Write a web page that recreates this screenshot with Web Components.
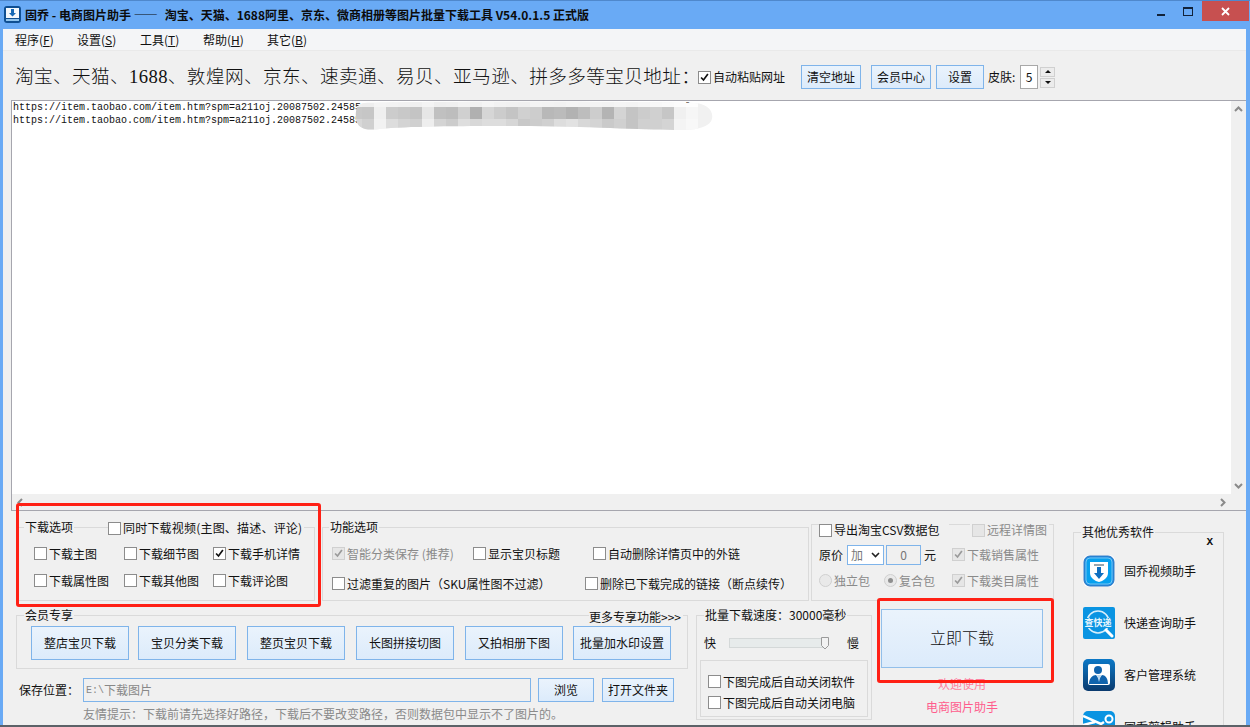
<!DOCTYPE html>
<html lang="zh">
<head>
<meta charset="utf-8">
<title>固乔 - 电商图片助手</title>
<style>
  html, body { margin: 0; height: 100%; overflow: hidden; background: #69aaf5; }
  body { font: 12px/16px "Noto Sans CJK SC", sans-serif; color: #111; }
</style>
</head>
<body>
<app-window></app-window>
<script>
const UI_FONT = '"Noto Sans CJK SC", sans-serif'

class XCheck extends HTMLElement {
  constructor () {
    super()
    this.shadowDOM = this.attachShadow({ mode: 'open' })
  }

  connectedCallback () {
    const disabled = this.hasAttribute('disabled')
    const tick = this.hasAttribute('checked')
      ? `<svg viewBox="0 0 13 13" width="11" height="11"><path d="M2.5 6.5l2.8 3L10.5 2.5" fill="none" stroke="${disabled ? '#9a9a9a' : '#111'}" stroke-width="2"/></svg>`
      : ''
    this.shadowDOM.innerHTML = `
      <style>
        :host { display: inline-flex; align-items: center; gap: 2px; white-space: nowrap; color: ${disabled ? '#8a8a8a' : 'inherit'}; }
        .box {
          width: 13px; height: 13px; box-sizing: border-box;
          display: flex; align-items: center; justify-content: center;
          border: 1px solid ${disabled ? '#d0d0d0' : '#8c8c8c'};
          background: ${disabled ? '#e6e6e6' : '#fff'};
        }
      </style>
      <span class="box">${tick}</span><slot></slot>
    `
  }
}
customElements.define('x-check', XCheck)

class XRadio extends HTMLElement {
  constructor () {
    super()
    this.shadowDOM = this.attachShadow({ mode: 'open' })
  }

  connectedCallback () {
    const dot = this.hasAttribute('checked') ? '<i></i>' : ''
    this.shadowDOM.innerHTML = `
      <style>
        :host { display: inline-flex; align-items: center; gap: 2px; white-space: nowrap; color: #8a8a8a; }
        .ring {
          width: 13px; height: 13px; box-sizing: border-box; border-radius: 50%;
          border: 1px solid #d0d0d0; background: #e9e9e9;
          display: flex; align-items: center; justify-content: center;
        }
        i { width: 5px; height: 5px; border-radius: 50%; background: #8f8f8f; }
      </style>
      <span class="ring">${dot}</span><slot></slot>
    `
  }
}
customElements.define('x-radio', XRadio)

class FlatButton extends HTMLElement {
  constructor () {
    super()
    this.shadowDOM = this.attachShadow({ mode: 'open' })
  }

  connectedCallback () {
    this.shadowDOM.innerHTML = `
      <style>
        :host {
          display: flex; align-items: center; justify-content: center;
          box-sizing: border-box; white-space: nowrap;
          border: 1px solid #7fb4ea;
          background: linear-gradient(#eaf3fc, #dcebfb);
        }
      </style>
      <slot></slot>
    `
  }
}
customElements.define('flat-button', FlatButton)

class GroupBox extends HTMLElement {
  constructor () {
    super()
    this.shadowDOM = this.attachShadow({ mode: 'open' })
  }

  connectedCallback () {
    this.shadowDOM.innerHTML = `
      <style>
        :host { display: block; position: relative; box-sizing: border-box; }
        fieldset {
          box-sizing: border-box; width: 100%; height: 100%; margin: 0;
          padding: var(--pad, 0);
          border: 1px solid #dadada; min-width: 0;
        }
        legend {
          margin-left: var(--legend-left, 8px);
          padding: var(--legend-pad, 0 1px);
          line-height: 16px; white-space: nowrap;
        }
      </style>
      <fieldset>
        <legend><slot name="legend"></slot></legend>
        <slot></slot>
      </fieldset>
    `
  }
}
customElements.define('group-box', GroupBox)

class RedMark extends HTMLElement {
  constructor () {
    super()
    this.shadowDOM = this.attachShadow({ mode: 'open' })
  }

  connectedCallback () {
    this.shadowDOM.innerHTML = `
      <style>
        :host {
          position: absolute; box-sizing: border-box; pointer-events: none;
          border: 3px solid #ff2015; border-radius: 3px;
        }
      </style>
    `
  }
}
customElements.define('red-mark', RedMark)

class TitleBar extends HTMLElement {
  constructor () {
    super()
    this.shadowDOM = this.attachShadow({ mode: 'open' })
  }

  connectedCallback () {
    this.shadowDOM.innerHTML = `
      <style>
        :host {
          display: flex; align-items: flex-start; height: 29px; box-sizing: border-box;
          border-top: 1px solid #4f88cc; background: #69aaf5;
        }
        .logo { margin: 5px 0 0 4px; }
        .text { margin: 6px 0 0 4px; font-weight: 700; white-space: nowrap; color: #0c0c0c; }
        .dash { letter-spacing: 7px; }
        .ctrl { margin-left: auto; display: flex; align-items: flex-start; }
        .min { width: 8px; height: 2px; margin: 13px 18px 0 0; background: #12233a; }
        .max { width: 10px; height: 9px; box-sizing: border-box; margin: 6px 9px 0 0; border: 1px solid #12233a; border-top-width: 2px; }
        .close { width: 47px; height: 20px; margin-right: 1px; background: #c75050; display: flex; align-items: center; justify-content: center; }
      </style>
      <svg class="logo" width="17" height="17" viewBox="0 0 17 17">
        <rect x="0" y="0" width="17" height="17" rx="3" fill="#0f4f92"/>
        <rect x="2" y="2" width="13" height="10" fill="#f4f8fc"/>
        <path d="M7 3h3v4h2l-3.500 3.500L5 7h2z" fill="#1668b5"/>
        <rect x="2" y="13" width="13" height="2" fill="#8fc4ee"/>
      </svg>
      <span class="text">固乔 - 电商图片助手 <span class="dash">——</span>淘宝、天猫、1688阿里、京东、微商相册等图片批量下载工具 V54.0.1.5 正式版</span>
      <span class="ctrl">
        <span class="min"></span>
        <span class="max"></span>
        <span class="close">
          <svg width="9" height="9" viewBox="0 0 9 9"><path d="M1 1l7 7M8 1L1 8" stroke="#fff" stroke-width="1.800"/></svg>
        </span>
      </span>
    `
  }
}
customElements.define('title-bar', TitleBar)

class MenuBar extends HTMLElement {
  constructor () {
    super()
    this.shadowDOM = this.attachShadow({ mode: 'open' })
  }

  connectedCallback () {
    this.shadowDOM.innerHTML = `
      <style>
        :host {
          display: grid; grid-template-columns: 62px 63px 63px 64px auto; align-items: center;
          height: 22px; box-sizing: border-box; padding-left: 12px;
          background: #f4f5f7; border-bottom: 1px solid #e9e9e9; white-space: nowrap;
        }
      </style>
      <span>程序(<u>F</u>)</span>
      <span>设置(<u>S</u>)</span>
      <span>工具(<u>T</u>)</span>
      <span>帮助(<u>H</u>)</span>
      <span>其它(<u>B</u>)</span>
    `
  }
}
customElements.define('menu-bar', MenuBar)

class SpinBox extends HTMLElement {
  constructor () {
    super()
    this.shadowDOM = this.attachShadow({ mode: 'open' })
  }

  connectedCallback () {
    this.shadowDOM.innerHTML = `
      <style>
        :host { display: flex; align-items: center; gap: 2px; }
        .val {
          width: 18px; height: 24px; box-sizing: border-box; background: #fff;
          border: 1px solid #a8a8a8; display: flex; align-items: center; justify-content: center;
        }
        .arrows { display: flex; flex-direction: column; gap: 1px; }
        .arrows span {
          width: 15px; height: 10px; box-sizing: border-box; border: 1px solid #d0d0d0; background: #ececec;
          display: flex; align-items: center; justify-content: center;
        }
      </style>
      <span class="val"><slot></slot></span>
      <span class="arrows">
        <span><svg width="6" height="3" viewBox="0 0 6 3"><path d="M3 0l3 3H0z" fill="#111"/></svg></span>
        <span><svg width="6" height="3" viewBox="0 0 6 3"><path d="M0 0h6L3 3z" fill="#111"/></svg></span>
      </span>
    `
  }
}
customElements.define('spin-box', SpinBox)

class ToolBar extends HTMLElement {
  constructor () {
    super()
    this.shadowDOM = this.attachShadow({ mode: 'open' })
  }

  connectedCallback () {
    this.shadowDOM.innerHTML = `
      <style>
        :host {
          display: flex; align-items: center; height: 49px; box-sizing: border-box;
          padding: 3px 0 0 12px; background: #f0f0f0; white-space: nowrap;
        }
        .big { width: 683px; font: 300 18.670px/24px "Liberation Serif", ${UI_FONT}; letter-spacing: .36px; color: #111; }
        x-check { width: 103px; }
        flat-button { height: 24px; }
        .w60 { width: 60px; }
        .w48 { width: 48px; }
        .skin { width: 32px; }
      </style>
      <span class="big">淘宝、天猫、1688、敦煌网、京东、速卖通、易贝、亚马逊、拼多多等宝贝地址：</span>
      <x-check checked>自动粘贴网址</x-check>
      <flat-button class="w60">清空地址</flat-button>
      <flat-button class="w60" style="margin-left:10px">会员中心</flat-button>
      <flat-button class="w48" style="margin-left:5px">设置</flat-button>
      <span class="skin" style="margin-left:4px">皮肤:</span>
      <spin-box>5</spin-box>
    `
  }
}
customElements.define('tool-bar', ToolBar)

class MosaicBlur extends HTMLElement {
  constructor () {
    super()
    this.shadowDOM = this.attachShadow({ mode: 'open' })
  }

  connectedCallback () {
    const rows = [
      ['f0', 'ee', 'f4', 'f3', 'f2', 'f0', 'f4', 'ef', 'f0', 'f3', 'f1', 'f5', 'f2', 'f1', 'f0', 'f4', 'f3', 'f2', 'f4', 'f3', 'f4', 'f3', 'f5', 'f4', 'f6', 'f8', 'fa', 'fc', 'fd'],
      ['c8', 'c6', 'ef', 'cc', 'c8', 'c4', 'e6', 'c0', 'bd', 'd0', 'b0', 'd6', 'cc', 'c4', 'd0', 'cd', 'b8', 'bb', 'b2', 'bd', 'cd', 'b4', 'd4', 'c4', 'cc', 'd0', 'c6', 'f0', 'f6'],
      ['d8', 'd0', 'f2', 'dd', 'd4', 'd0', 'ee', 'd4', 'cc', 'de', 'd8', 'dd', 'dd', 'd6', 'c8', 'cc', 'd0', 'dd', 'e2', 'd8', 'd4', 'ca', 'd0', 'c4', 'd0', 'd0', 'd4', 'f4', 'f8']
    ]
    const heights = [5, 12, 12]
    const tops = [2, 7, 19]
    const rects = rows.map((row, r) => row.map((c, i) =>
      `<rect x="${i * 12}" y="${tops[r]}" width="12" height="${heights[r]}" fill="#${c}${c}${c}"/>`
    ).join('')).join('')
    this.shadowDOM.innerHTML = `
      <style>
        :host { position: absolute; display: block; width: 364px; height: 32px; }
        svg { display: block; }
      </style>
      <svg width="364" height="32" viewBox="0 0 364 32">
        <clipPath id="blob">
          <path d="M14 3C60 1 300 1 336 3 346 2 360 4 362 14 364 24 354 30 330 30 300 30 250 27 180 26 120 26 60 26 30 29 14 31 7 28 6 18 5 8 8 4 14 3z"/>
        </clipPath>
        <g clip-path="url(#blob)"><rect width="364" height="32" fill="#f1f1f1"/>${rects}</g>
      </svg>
    `
  }
}
customElements.define('mosaic-blur', MosaicBlur)

class UrlEditor extends HTMLElement {
  constructor () {
    super()
    this.shadowDOM = this.attachShadow({ mode: 'open' })
  }

  connectedCallback () {
    const url = 'https://item.taobao.com/item.htm?spm=a211oj.20087502.24585'
    this.shadowDOM.innerHTML = `
      <style>
        :host {
          display: grid; grid-template-columns: 1fr 15px; grid-template-rows: 1fr 16px;
          height: 411px; box-sizing: border-box; margin-left: 8px;
          border: solid #a6a6ae; border-width: 1px 0 1px 1px; background: #f0f0f0;
        }
        .text {
          background: #fff; padding: 0 0 0 1px; overflow: hidden;
          font: 10px/13px "Liberation Mono", monospace; color: #111; white-space: pre;
        }
        .vbar { display: flex; flex-direction: column; justify-content: space-between; align-items: center; padding: 5px 0; }
        .hbar { display: flex; justify-content: space-between; align-items: center; padding: 0 5px; }
        polyline { fill: none; stroke: #8a8a8a; stroke-width: 2; }
      </style>
      <div class="text"><div>${url}${' '.repeat(54)}]</div><div>${url}</div></div>
      <div class="vbar">
        <svg width="9" height="6"><polyline points="1,5 4.500,1.500 8,5"/></svg>
        <svg width="9" height="6"><polyline points="1,1 4.500,4.500 8,1"/></svg>
      </div>
      <div class="hbar">
        <svg width="6" height="9"><polyline points="5,1 1.500,4.500 5,8"/></svg>
        <svg width="6" height="9"><polyline points="1,1 4.500,4.500 1,8"/></svg>
      </div>
      <div></div>
    `
  }
}
customElements.define('url-editor', UrlEditor)

class DownloadOptions extends HTMLElement {
  constructor () {
    super()
    this.shadowDOM = this.attachShadow({ mode: 'open' })
  }

  connectedCallback () {
    this.shadowDOM.innerHTML = `
      <style>
        :host { display: flex; align-items: flex-end; height: 90px; padding-left: 2px; }
        .opts { width: 297px; height: 82px; --pad: 5px 0 0 15px; --legend-left: -10px; }
        .grid { display: grid; grid-template-columns: 90px 89px auto; grid-auto-rows: 27px; align-items: center; }
        .video { position: absolute; left: 90px; top: 1px; padding-right: 2px; background: #f0f0f0; letter-spacing: .2px; }
        .func { width: 487px; height: 82px; margin-left: 7px; --pad: 5px 0 0 9px; --legend-left: -3px; }
        .row { display: grid; height: 29px; align-items: center; }
        .r1 { grid-template-columns: 141px 120px auto; height: 27px; }
        .r2 { grid-template-columns: 253px auto; margin-top: 2px; }
        .csv { width: 243px; height: 91px; margin-left: 2px; --pad: 2px 0 0 7px; --legend-left: 0; --legend-pad: 12px 10px 0 0; }
        .c1 { display: grid; grid-template-columns: 28px 39px 38px 28px auto; align-items: center; height: 26px; }
        .c2 { display: grid; grid-template-columns: 65px 68px auto; align-items: center; height: 26px; }
        .remote { position: absolute; left: 159px; top: 12px; padding: 0 2px; background: #f0f0f0; }
        .select {
          width: 37px; height: 20px; box-sizing: border-box; border: 1px solid #7fb4ea; background: #fff;
          display: flex; align-items: center; justify-content: space-between; padding: 0 3px 0 3px; color: #777;
        }
        .select svg { display: block; }
        .num {
          width: 35px; height: 20px; box-sizing: border-box; border: 1px solid #7fb4ea;
          display: flex; align-items: center; justify-content: center; color: #777;
        }
      </style>
      <group-box class="opts">
        <span slot="legend">下载选项</span>
        <x-check class="video">同时下载视频(主图、描述、评论)</x-check>
        <div class="grid">
          <x-check>下载主图</x-check><x-check>下载细节图</x-check><x-check checked>下载手机详情</x-check>
          <x-check>下载属性图</x-check><x-check>下载其他图</x-check><x-check>下载评论图</x-check>
        </div>
      </group-box>
      <group-box class="func">
        <span slot="legend">功能选项</span>
        <div class="row r1">
          <x-check checked disabled>智能分类保存 (推荐)</x-check><x-check>显示宝贝标题</x-check><x-check>自动删除详情页中的外链</x-check>
        </div>
        <div class="row r2">
          <x-check>过滤重复的图片（SKU属性图不过滤）</x-check><x-check>删除已下载完成的链接（断点续传）</x-check>
        </div>
      </group-box>
      <group-box class="csv">
        <x-check slot="legend">导出淘宝CSV数据包</x-check>
        <x-check class="remote" disabled>远程详情图</x-check>
        <div class="c1">
          <span>原价</span>
          <span class="select">加<svg width="9" height="6"><path d="M1 1l3.500 3.500L8 1" fill="none" stroke="#222" stroke-width="1.600"/></svg></span>
          <span class="num">0</span>
          <span>元</span>
          <x-check checked disabled>下载销售属性</x-check>
        </div>
        <div class="c2">
          <x-radio>独立包</x-radio><x-radio checked>复合包</x-radio><x-check checked disabled>下载类目属性</x-check>
        </div>
      </group-box>
    `
  }
}
customElements.define('download-options', DownloadOptions)

class MemberTools extends HTMLElement {
  constructor () {
    super()
    this.shadowDOM = this.attachShadow({ mode: 'open' })
  }

  connectedCallback () {
    this.shadowDOM.innerHTML = `
      <style>
        :host { display: block; width: 672px; margin-top: -2px; }
        group-box { height: 62px; --pad: 3px 0 0 14px; --legend-left: -7px; }
        .btns { display: grid; grid-template-columns: 107px 109px 109px 109px 108px 98px; }
        flat-button { width: 98px; height: 34px; }
        .more { position: absolute; left: 573px; top: 2px; padding-right: 2px; background: #f0f0f0; white-space: nowrap; }
        .save { display: flex; align-items: center; height: 24px; margin-top: 9px; padding-left: 3px; }
        .label { width: 64px; }
        .path {
          width: 448px; height: 24px; box-sizing: border-box; border: 1px solid #7fb4ea; padding-left: 2px;
          display: flex; align-items: center; color: #888;
        }
        .path b { font: 400 10px "Liberation Mono", monospace; }
        .browse { width: 56px; height: 24px; margin-left: 7px; }
        .open { width: 72px; height: 24px; margin-left: 8px; }
        .hint { margin: 4px 0 0 67px; color: #8a8a8a; white-space: nowrap; }
      </style>
      <group-box>
        <span slot="legend">会员专享</span>
        <span class="more">更多专享功能&gt;&gt;&gt;</span>
        <div class="btns">
          <flat-button>整店宝贝下载</flat-button>
          <flat-button>宝贝分类下载</flat-button>
          <flat-button>整页宝贝下载</flat-button>
          <flat-button>长图拼接切图</flat-button>
          <flat-button>又拍相册下图</flat-button>
          <flat-button>批量加水印设置</flat-button>
        </div>
      </group-box>
      <div class="save">
        <span class="label">保存位置：</span>
        <span class="path"><b>E:\\</b>下载图片</span>
        <flat-button class="browse">浏览</flat-button>
        <flat-button class="open">打开文件夹</flat-button>
      </div>
      <div class="hint">友情提示：下载前请先选择好路径，下载后不要改变路径，否则数据包中显示不了图片的。</div>
    `
  }
}
customElements.define('member-tools', MemberTools)

class SpeedPanel extends HTMLElement {
  constructor () {
    super()
    this.shadowDOM = this.attachShadow({ mode: 'open' })
  }

  connectedCallback () {
    this.shadowDOM.innerHTML = `
      <style>
        :host { display: block; width: 176px; height: 113px; margin: -2px 0 0 8px; }
        group-box { height: 100%; --pad: 0 0 0 3px; --legend-left: 4px; }
        .speed { display: flex; align-items: center; height: 20px; margin-top: 10px; padding-left: 4px; }
        .track { width: 100px; height: 16px; margin: 0 18px 0 13px; display: block; }
        .auto {
          width: 168px; height: 57px; box-sizing: border-box; margin-top: 7px; padding: 10px 0 0 7px;
          border: 1px solid #dadada; display: grid; grid-auto-rows: 21px; align-items: center;
        }
      </style>
      <group-box>
        <span slot="legend">批量下载速度：30000毫秒</span>
        <div class="speed">
          <span>快</span>
          <svg class="track" viewBox="0 0 100 16">
            <rect x="0.500" y="3.500" width="97" height="9" fill="#e7ebeb" stroke="#d4d8d8"/>
            <path d="M92.500 2.500h7v8l-3.500 3.500-3.500-3.500z" fill="#f2f2f2" stroke="#9a9a9a"/>
          </svg>
          <span>慢</span>
        </div>
        <div class="auto">
          <x-check>下图完成后自动关闭软件</x-check>
          <x-check>下图完成后自动关闭电脑</x-check>
        </div>
      </group-box>
    `
  }
}
customElements.define('speed-panel', SpeedPanel)

class GoPanel extends HTMLElement {
  constructor () {
    super()
    this.shadowDOM = this.attachShadow({ mode: 'open' })
  }

  connectedCallback () {
    this.shadowDOM.innerHTML = `
      <style>
        :host { display: block; width: 162px; margin-left: 9px; text-align: center; color: #ff5c8d; }
        flat-button { height: 59px; padding-bottom: 4px; font-size: 16px; font-weight: 300; color: #111; border-color: #92bfea; }
        .a { margin-top: 8px; color: #ff7f9f; }
        .b { margin-top: 7px; }
      </style>
      <flat-button>立即下载</flat-button>
      <div class="a">欢迎使用</div>
      <div class="b">电商图片助手</div>
    `
  }
}
customElements.define('go-panel', GoPanel)

class SoftItem extends HTMLElement {
  constructor () {
    super()
    this.shadowDOM = this.attachShadow({ mode: 'open' })
  }

  connectedCallback () {
    this.shadowDOM.innerHTML = `
      <style>
        :host { display: flex; align-items: center; gap: 9px; height: 32px; white-space: nowrap; }
        ::slotted(svg) { display: block; flex: none; }
      </style>
      <slot name="icon"></slot><slot></slot>
    `
  }
}
customElements.define('soft-item', SoftItem)

class SoftList extends HTMLElement {
  constructor () {
    super()
    this.shadowDOM = this.attachShadow({ mode: 'open' })
  }

  connectedCallback () {
    this.shadowDOM.innerHTML = `
      <style>
        :host { display: block; flex: none; width: 151px; height: 230px; margin: 13px 0 0 19px; }
        group-box { height: 100%; --pad: 15px 0 0 9px; --legend-left: -2px; }
        .list { display: flex; flex-direction: column; gap: 20px; }
        .x { position: absolute; right: 11px; top: 11px; font: 700 11px/14px "Liberation Mono", monospace; }
      </style>
      <group-box>
        <span slot="legend">其他优秀软件</span>
        <span class="x">X</span>
        <div class="list">
          <soft-item>
            <svg slot="icon" width="32" height="32" viewBox="0 0 32 32">
              <rect width="32" height="32" rx="6" fill="#fff"/>
              <rect x="1" y="1" width="30" height="30" rx="6" fill="#1e8fe3" stroke="#2f74c0"/>
              <rect x="3" y="3" width="26" height="26" rx="4" fill="#06a0ee" stroke="#8fd0f6" stroke-width=".8"/>
              <path d="M7 7h18v11c0 5-5 8-9 9-4-1-9-4-9-9z" fill="#fff"/>
              <rect x="11" y="9" width="10" height="2" fill="#9aa5ad"/>
              <path d="M14 12h4v6h3l-5 6-5-6h3z" fill="#0f6fc0"/>
            </svg>
            固乔视频助手
          </soft-item>
          <soft-item>
            <svg slot="icon" width="32" height="32" viewBox="0 0 32 32">
              <rect width="32" height="32" rx="2" fill="#0a94e2"/>
              <circle cx="15" cy="15" r="11" fill="none" stroke="#d7eefb" stroke-width="1.600"/>
              <rect x="1" y="11" width="28" height="10" fill="#0a94e2"/>
              <text x="15" y="19" text-anchor="middle" font-size="9" font-weight="700" fill="#e8f6fd" font-family="Noto Sans CJK SC, sans-serif">查快递</text>
              <path d="M23 23l6 6" stroke="#fff" stroke-width="3" stroke-linecap="round"/>
            </svg>
            快递查询助手
          </soft-item>
          <soft-item>
            <svg slot="icon" width="32" height="32" viewBox="0 0 32 32">
              <defs><linearGradient id="navy" x1="0" y1="0" x2="0" y2="1"><stop offset="0" stop-color="#0c78c6"/><stop offset="1" stop-color="#0a3a6e"/></linearGradient></defs>
              <rect width="32" height="32" rx="5" fill="url(#navy)"/>
              <rect x="5" y="5" width="22" height="21" rx="2" fill="#fff"/>
              <circle cx="15" cy="11" r="4" fill="#0f63ad"/>
              <path d="M6 25c0-6 4-9 7-9l3 4 3-4c3 0 6 3 6 9z" fill="#0f63ad"/>
              <path d="M14 16l2 7 2-7z" fill="#bcd9ef"/>
            </svg>
            客户管理系统
          </soft-item>
          <soft-item>
            <svg slot="icon" width="32" height="32" viewBox="0 0 32 32">
              <rect width="32" height="32" rx="5" fill="#0a94e2"/>
              <path d="M0 5l18 8 3-2M0 14l12-3" fill="none" stroke="#fff" stroke-width="2.500"/>
              <circle cx="26" cy="8" r="3.500" fill="none" stroke="#fff" stroke-width="2"/>
            </svg>
            固乔剪辑助手
          </soft-item>
        </div>
      </group-box>
    `
  }
}
customElements.define('soft-list', SoftList)

class BottomPanel extends HTMLElement {
  constructor () {
    super()
    this.shadowDOM = this.attachShadow({ mode: 'open' })
  }

  connectedCallback () {
    this.shadowDOM.innerHTML = `
      <style>
        :host { display: flex; height: 214px; padding-left: 13px; background: #f0f0f0; overflow: hidden; }
        .main { flex: none; width: 1038px; }
        .lower { display: flex; align-items: flex-start; margin-top: 8px; }
      </style>
      <div class="main">
        <download-options></download-options>
        <div class="lower">
          <member-tools></member-tools>
          <speed-panel></speed-panel>
          <go-panel></go-panel>
        </div>
      </div>
      <soft-list></soft-list>
    `
  }
}
customElements.define('bottom-panel', BottomPanel)

class AppWindow extends HTMLElement {
  constructor () {
    super()
    this.shadowDOM = this.attachShadow({ mode: 'open' })
  }

  connectedCallback () {
    this.shadowDOM.innerHTML = `
      <style>
        :host { display: block; position: relative; width: 1250px; height: 727px; overflow: hidden; }
        .client { margin: 0 4px 0 3px; background: #f0f0f0; }
        .foot { height: 2px; background: #5c6268; }
      </style>
      <title-bar></title-bar>
      <div class="client">
        <menu-bar></menu-bar>
        <tool-bar></tool-bar>
        <url-editor></url-editor>
        <bottom-panel></bottom-panel>
      </div>
      <div class="foot"></div>
      <mosaic-blur style="left:350px;top:100px"></mosaic-blur>
      <red-mark style="left:16px;top:503px;width:305px;height:104px"></red-mark>
      <red-mark style="left:877px;top:598px;width:177px;height:85px"></red-mark>
    `
  }
}
customElements.define('app-window', AppWindow)
</script>
</body>
</html>
